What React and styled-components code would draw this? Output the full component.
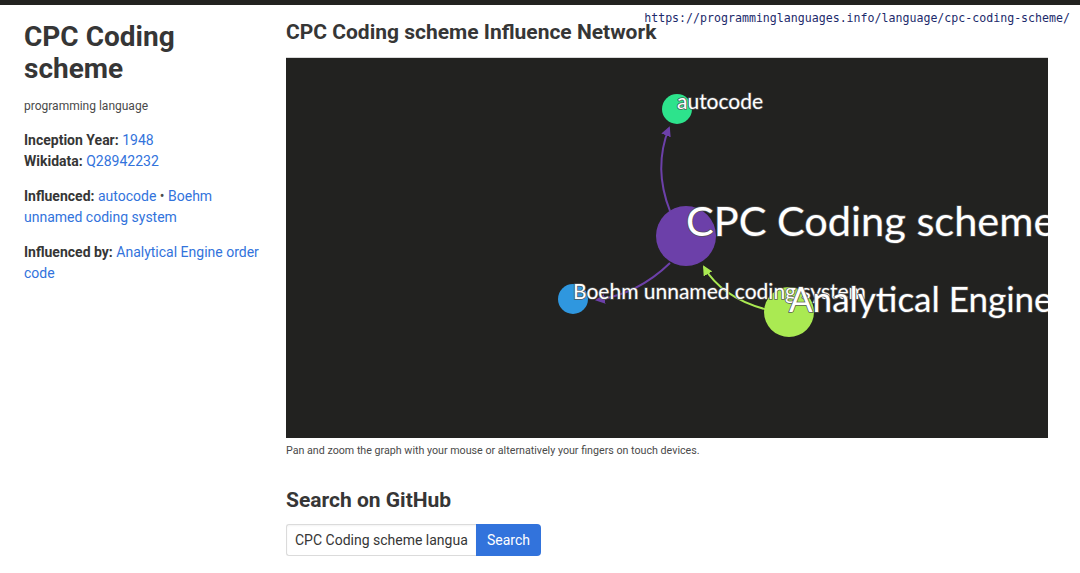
import styled, { createGlobalStyle } from "styled-components";

const GlobalStyle = createGlobalStyle`
  html, body {
    margin: 0;
    padding: 0;
    background: #fff;
  }
  body {
    font-family: Roboto, "Liberation Sans", sans-serif;
    color: #4a4a4a;
  }
  * {
    box-sizing: border-box;
  }
`;

const TopBar = styled.div`
  height: 5px;
  background: #222220;
`;

const Page = styled.div`
  position: relative;
  display: flex;
  gap: 17px;
  padding: 0 32px 0 24px;
`;

const Sidebar = styled.aside`
  width: 245px;
  flex-shrink: 0;
  padding-top: 16px;
`;

const Title = styled.h1`
  margin: 0 0 12px;
  font-size: 28px;
  line-height: 32px;
  font-weight: 700;
  color: #363636;
`;

const Subtitle = styled.p`
  margin: 0 0 15px;
  font-size: 12px;
  line-height: 18px;
  color: #4a4a4a;
`;

const Facts = styled.p`
  margin: 0 0 14px;
  font-size: 14px;
  line-height: 21px;
  color: #4a4a4a;
`;

const Label = styled.strong`
  font-weight: 700;
  color: #363636;
`;

const Link = styled.a`
  color: #3273dc;
  text-decoration: none;
`;

const Main = styled.main`
  flex: 1;
  min-width: 0;
  padding-top: 14px;
`;

const SectionTitle = styled.h2`
  margin: 0 0 ${(p) => p.$gap || 0}px;
  font-size: 21px;
  line-height: 26px;
  font-weight: 700;
  color: #363636;
`;

const GraphBox = styled.div`
  height: 381px;
  background: #222220;
  border-top: 1px solid #d8d8d8;
  overflow: hidden;
`;

const Caption = styled.p`
  margin: 5px 0 28px;
  font-size: 10.7px;
  line-height: 16px;
  color: #4a4a4a;
`;

const SearchRow = styled.form`
  display: flex;
  margin-top: 11px;
`;

const SearchInput = styled.input`
  width: 190px;
  height: 32px;
  padding: 0 8px;
  border: 1px solid #dbdbdb;
  border-right: none;
  border-radius: 3px 0 0 3px;
  font-family: Roboto, "Liberation Sans", sans-serif;
  font-size: 14px;
  color: #363636;
  box-shadow: inset 0 1px 2px rgba(10, 10, 10, 0.05);
  outline: none;
`;

const SearchButton = styled.button`
  height: 32px;
  padding: 0 11px;
  border: none;
  border-radius: 0 4px 4px 0;
  background: #3273dc;
  color: #fff;
  font-family: Roboto, "Liberation Sans", sans-serif;
  font-size: 14px;
  cursor: pointer;
`;

const UrlStamp = styled.div`
  position: absolute;
  top: 6px;
  right: 10px;
  font-family: "DejaVu Sans Mono", monospace;
  font-size: 11.6px;
  line-height: 14px;
  color: #1c2a6b;
`;

const NodeLabel = styled.text`
  font-family: Lato, "Open Sans", sans-serif;
  fill: #fff;
  stroke: rgba(80, 80, 80, 0.9);
  stroke-width: 1.6px;
  paint-order: stroke;
`;

const nodes = [
  { id: "autocode", x: 391, y: 52, r: 15, color: "#2de38c", size: 21 },
  { id: "Boehm unnamed coding system", x: 287, y: 242, r: 15, color: "#2f97df", size: 21 },
  { id: "CPC Coding scheme", x: 400, y: 179, r: 30, color: "#6c40a9", size: 41.5 },
  { id: "Analytical Engine order code", x: 503, y: 255, r: 25, color: "#aaea52", size: 35 },
];

const edges = [
  { d: "M384,153 Q367,110 383,70", color: "#6c40a9", marker: "arrPurple" },
  { d: "M384,205 Q352,236 311,242", color: "#6c40a9", marker: "arrPurple" },
  { d: "M482,252 Q436,240 418,209", color: "#aaea52", marker: "arrGreen" },
];

const InfluenceGraph = () => (
  <svg width="100%" height="380" viewBox="0 0 762 380">
    <defs>
      <marker id="arrPurple" viewBox="0 0 10 10" refX="8" refY="5" markerWidth="5" markerHeight="5" orient="auto">
        <path d="M0,0 L10,5 L0,10 z" fill="#6c40a9" />
      </marker>
      <marker id="arrGreen" viewBox="0 0 10 10" refX="8" refY="5" markerWidth="5" markerHeight="5" orient="auto">
        <path d="M0,0 L10,5 L0,10 z" fill="#aaea52" />
      </marker>
    </defs>
    {edges.map((e, i) => (
      <path key={i} d={e.d} fill="none" stroke={e.color} strokeWidth="2" markerEnd={`url(#${e.marker})`} />
    ))}
    {nodes.map((n) => (
      <circle key={n.id} cx={n.x} cy={n.y - 1} r={n.r} fill={n.color} />
    ))}
    {nodes.map((n) => (
      <NodeLabel key={n.id} x={n.x} y={n.y - 1} fontSize={n.size}>
        {n.id}
      </NodeLabel>
    ))}
  </svg>
);

export default function App() {
  return (
    <>
      <GlobalStyle />
      <TopBar />
      <Page>
        <Sidebar>
          <Title>CPC Coding scheme</Title>
          <Subtitle>programming language</Subtitle>
          <Facts>
            <Label>Inception Year:</Label> <Link href="#">1948</Link>
            <br />
            <Label>Wikidata:</Label> <Link href="#">Q28942232</Link>
          </Facts>
          <Facts>
            <Label>Influenced:</Label> <Link href="#">autocode</Link> •{" "}
            <Link href="#">Boehm unnamed coding system</Link>
          </Facts>
          <Facts>
            <Label>Influenced by:</Label>{" "}
            <Link href="#">Analytical Engine order code</Link>
          </Facts>
        </Sidebar>
        <Main>
          <SectionTitle $gap={12}>CPC Coding scheme Influence Network</SectionTitle>
          <GraphBox>
            <InfluenceGraph />
          </GraphBox>
          <Caption>
            Pan and zoom the graph with your mouse or alternatively your fingers on touch devices.
          </Caption>
          <SectionTitle>Search on GitHub</SectionTitle>
          <SearchRow onSubmit={(e) => e.preventDefault()}>
            <SearchInput defaultValue="CPC Coding scheme language" />
            <SearchButton type="submit">Search</SearchButton>
          </SearchRow>
        </Main>
        <UrlStamp>https://programminglanguages.info/language/cpc-coding-scheme/</UrlStamp>
      </Page>
    </>
  );
}
